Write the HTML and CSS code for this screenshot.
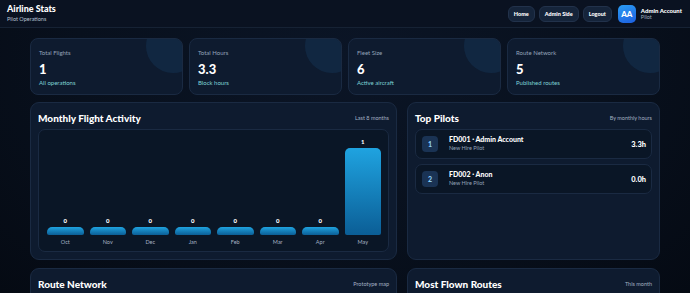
FILE: index.html
```html
<!DOCTYPE html>
<html lang="en">
<head>
  <meta charset="UTF-8" />
  <meta name="viewport" content="width=device-width, initial-scale=1.0"/>
  <title>Airline Stats</title>
  <link rel="stylesheet" href="styles.css">
</head>
<body>
  <header class="topbar">
    <div class="brand">
      <h1>Airline Stats</h1>
      <p>Pilot Operations</p>
    </div>
    <nav class="nav">
      <a href="#" class="nav-btn">Home</a>
      <a href="#" class="nav-btn">Admin Side</a>
      <a href="#" class="nav-btn">Logout</a>
      <div class="user">
        <div class="avatar">AA</div>
        <div class="user-info">
          <strong>Admin Account</strong>
          <span>Pilot</span>
        </div>
      </div>
    </nav>
  </header>

  <main class="container">
    <section class="stats">
      <div class="stat-card">
        <span class="stat-label">Total Flights</span>
        <span class="stat-value">1</span>
        <span class="stat-sub">All operations</span>
      </div>
      <div class="stat-card">
        <span class="stat-label">Total Hours</span>
        <span class="stat-value">3.3</span>
        <span class="stat-sub">Block hours</span>
      </div>
      <div class="stat-card">
        <span class="stat-label">Fleet Size</span>
        <span class="stat-value">6</span>
        <span class="stat-sub">Active aircraft</span>
      </div>
      <div class="stat-card">
        <span class="stat-label">Route Network</span>
        <span class="stat-value">5</span>
        <span class="stat-sub">Published routes</span>
      </div>
    </section>

    <section class="grid">
      <div class="panel">
        <div class="panel-head">
          <h2>Monthly Flight Activity</h2>
          <span class="panel-note">Last 8 months</span>
        </div>
        <div class="chart">
          <div class="bar-col"><span class="bar-val">0</span><div class="bar"></div><span class="bar-month">Oct</span></div>
          <div class="bar-col"><span class="bar-val">0</span><div class="bar"></div><span class="bar-month">Nov</span></div>
          <div class="bar-col"><span class="bar-val">0</span><div class="bar"></div><span class="bar-month">Dec</span></div>
          <div class="bar-col"><span class="bar-val">0</span><div class="bar"></div><span class="bar-month">Jan</span></div>
          <div class="bar-col"><span class="bar-val">0</span><div class="bar"></div><span class="bar-month">Feb</span></div>
          <div class="bar-col"><span class="bar-val">0</span><div class="bar"></div><span class="bar-month">Mar</span></div>
          <div class="bar-col"><span class="bar-val">0</span><div class="bar"></div><span class="bar-month">Apr</span></div>
          <div class="bar-col"><span class="bar-val">1</span><div class="bar" style="height: 87px"></div><span class="bar-month">May</span></div>
        </div>
      </div>

      <div class="panel">
        <div class="panel-head">
          <h2>Top Pilots</h2>
          <span class="panel-note">By monthly hours</span>
        </div>
        <div class="pilot-list">
          <div class="pilot-row">
            <span class="rank">1</span>
            <div class="pilot-info">
              <strong>FD001 · Admin Account</strong>
              <span>New Hire Pilot</span>
            </div>
            <span class="pilot-hours">3.3h</span>
          </div>
          <div class="pilot-row">
            <span class="rank">2</span>
            <div class="pilot-info">
              <strong>FD002 · Anon</strong>
              <span>New Hire Pilot</span>
            </div>
            <span class="pilot-hours">0.0h</span>
          </div>
        </div>
      </div>

      <div class="panel">
        <div class="panel-head">
          <h2>Route Network</h2>
          <span class="panel-note">Prototype map</span>
        </div>
      </div>

      <div class="panel">
        <div class="panel-head">
          <h2>Most Flown Routes</h2>
          <span class="panel-note">This month</span>
        </div>
      </div>
    </section>
  </main>
</body>
</html>
```

FILE: styles.css
```css
:root {
  --card: #0e1b2f;
  --card-border: #1a2a42;
  --inset: #0a1626;
  --muted: #93a3b8;
  --accent: #7fd3d6;
}

* {
  margin: 0;
  padding: 0;
  box-sizing: border-box;
}

html,
body {
  height: 293px;
  overflow: hidden;
}

body {
  font-family: 'Lato', sans-serif;
  background: radial-gradient(ellipse at 50% 20%, #0b1526 0%, #08101d 55%, #050a13 100%);
  color: #fff;
  width: 690px;
}

a {
  color: #fff;
  text-decoration: none;
}

/* header */
.topbar {
  height: 28px;
  display: flex;
  align-items: center;
  justify-content: space-between;
  padding: 0 8px 0 7px;
  background: #0a1221;
  border-bottom: 1px solid #162234;
}

.brand h1 {
  font-size: 9px;
  font-weight: 900;
  line-height: 11px;
  margin-top: -2px;
}

.brand p {
  font-size: 5.5px;
  color: #b7c2d2;
  line-height: 8px;
  margin-top: 1px;
}

.nav {
  display: flex;
  align-items: center;
  gap: 4px;
}

.nav-btn {
  height: 16px;
  padding: 0 5px;
  display: flex;
  align-items: center;
  font-size: 5.5px;
  font-weight: 900;
  background: #15243a;
  border: 1px solid #22324b;
  border-radius: 6px;
}

.user {
  display: flex;
  align-items: center;
  gap: 5px;
  margin-left: 2px;
}

.avatar {
  width: 18px;
  height: 18px;
  border-radius: 5px;
  background: linear-gradient(160deg, #2a9df4, #1d5fe0);
  display: flex;
  align-items: center;
  justify-content: center;
  font-size: 8px;
  font-weight: 900;
}

.user-info {
  display: flex;
  flex-direction: column;
  line-height: 7px;
}

.user-info strong {
  font-size: 6px;
  font-weight: 900;
}

.user-info span {
  font-size: 5.5px;
  color: #9aa8bb;
}

/* layout */
.container {
  width: 630px;
  margin: 10px auto 0;
}

.stats {
  display: grid;
  grid-template-columns: repeat(4, 1fr);
  gap: 6px;
}

.stat-card {
  position: relative;
  overflow: hidden;
  height: 57px;
  padding: 10px 8px 0;
  display: flex;
  flex-direction: column;
  background: var(--card);
  border: 1px solid var(--card-border);
  border-radius: 8px;
}

.stat-card::after {
  content: "";
  position: absolute;
  top: -20px;
  right: -18px;
  width: 54px;
  height: 54px;
  border-radius: 50%;
  background: rgba(40, 120, 190, 0.13);
}

.stat-label {
  font-size: 6px;
  color: var(--muted);
  line-height: 8px;
}

.stat-value {
  font-size: 13px;
  font-weight: 900;
  line-height: 16px;
  margin-top: 4px;
}

.stat-sub {
  font-size: 6px;
  color: var(--accent);
  line-height: 8px;
  margin-top: 2px;
}

.grid {
  display: grid;
  grid-template-columns: 367px 253px;
  grid-template-rows: 158px 40px;
  gap: 8px 10px;
  margin-top: 7px;
}

.panel {
  background: var(--card);
  border: 1px solid var(--card-border);
  border-radius: 9px;
  padding: 8px 7px 7px;
  display: flex;
  flex-direction: column;
}

.panel-head {
  display: flex;
  justify-content: space-between;
  align-items: center;
  height: 14px;
  margin-bottom: 4px;
}

.panel-head h2 {
  font-size: 10px;
  font-weight: 900;
}

.panel-note {
  font-size: 5.5px;
  color: #a3b0c2;
}

/* chart */
.chart {
  flex: 1;
  display: flex;
  align-items: flex-end;
  gap: 6px;
  padding: 0 7px 5px 8px;
  background: var(--inset);
  border: 1px solid var(--card-border);
  border-radius: 7px;
}

.bar-col {
  flex: 1;
  display: flex;
  flex-direction: column;
  align-items: center;
}

.bar-val {
  font-size: 6px;
  font-weight: 900;
  line-height: 7px;
  margin-bottom: 3px;
}

.bar {
  width: 100%;
  height: 8px;
  border-radius: 5px 5px 2px 2px;
  background: linear-gradient(180deg, #1fa3e0, #0b5e96);
}

.bar-month {
  font-size: 5.5px;
  color: #a3b0c2;
  line-height: 7px;
  margin-top: 4px;
}

/* pilots */
.pilot-list {
  display: flex;
  flex-direction: column;
  gap: 5px;
}

.pilot-row {
  height: 30px;
  display: flex;
  align-items: center;
  padding: 0 5px 0 6px;
  background: var(--inset);
  border: 1px solid var(--card-border);
  border-radius: 7px;
}

.rank {
  width: 16px;
  height: 16px;
  border-radius: 4px;
  background: #1a3354;
  color: #8ccdf5;
  font-size: 7px;
  font-weight: 900;
  display: flex;
  align-items: center;
  justify-content: center;
  margin-right: 11px;
}

.pilot-info {
  flex: 1;
  display: flex;
  flex-direction: column;
  line-height: 9px;
}

.pilot-info strong {
  font-size: 7px;
  font-weight: 900;
}

.pilot-info span {
  font-size: 5.5px;
  color: #93a3b8;
}

.pilot-hours {
  font-size: 7.5px;
  font-weight: 900;
}
```
